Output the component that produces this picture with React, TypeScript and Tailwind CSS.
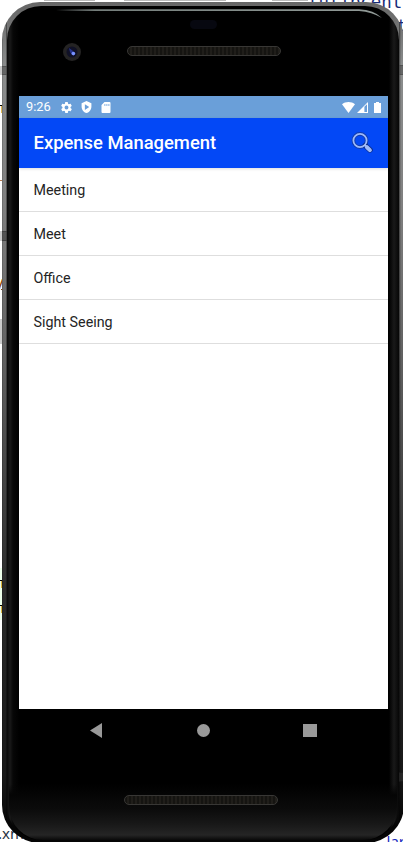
import React from "react";

const entries = ["Meeting", "Meet", "Office", "Sight Seeing"];

function Speaker() {
  return (
    <div className="h-[10px] w-[154px] shrink-0 rounded-full border border-[#383735] bg-[#151412] bg-[repeating-linear-gradient(90deg,#151411_0_2px,#201e1a_2px_4px)]" />
  );
}

function Backdrop() {
  return (
    <div className="absolute inset-0 flex flex-col justify-between overflow-hidden bg-white font-['DejaVu_Sans_Mono',monospace] text-[15px] text-[#172b78]">
      <div className="flex items-start justify-between">
        <div className="flex w-[6px] flex-col">
          <div className="mt-[66px] h-[9px] bg-[#ccc]" />
          <div className="mt-[30px] h-px bg-black" />
          <div className="ml-px h-[7px] w-px bg-[#e3b94f]" />
          <div className="mt-[67px] h-px w-[2px] bg-[#b77b51]" />
          <div className="mt-[50px] h-[10px] bg-[#ccc]" />
          <div className="mt-[34px] flex h-[16px] justify-end leading-4 text-[#8b4300] underline"><span className="mr-[2px]">y</span></div>
          <div className="mt-[28px] h-[25px] bg-[#ccc]" />
          <div className="mt-[224px] h-[52px] w-[2px] bg-[#edffea] pt-[12px]">
            <div className="h-px bg-black" />
            <div className="ml-px h-[7px] w-px bg-[#dfb53c]" />
            <div className="mt-[17px] h-px bg-black" />
            <div className="ml-px h-[7px] w-px bg-[#dfb53c]" />
          </div>
        </div>
        <div className="ml-[38px] h-px w-[51px] bg-[#bbb]" />
        <div className="ml-[29px] h-px w-[102px] bg-[#bbb]" />
        <div className="ml-[46px] h-px w-[36px] bg-[#bbb]" />
        <div className="-mt-[7px] w-[95px] shrink-0 whitespace-nowrap leading-[18px]">
          <div className="text-[17.4px]">tulipcent</div>
          <div className="mt-[6px] pl-[89px]">t</div>
        </div>
      </div>
      <div className="-mb-[9px] flex justify-between font-['Noto_Sans',sans-serif] leading-5">
        <span className="-ml-[2px] -mt-[8px] text-[#26343f]">.xm</span>
        <span className="-mr-[2px] text-[#172bbd]">lar</span>
      </div>
    </div>
  );
}

function StatusBar() {
  return (
    <div className="flex h-[22px] shrink-0 items-center bg-[#6a9fd9] text-white">
      <span className="ml-[7px] w-[26px] text-[12.8px] leading-[22px]">9:26</span>
      <svg className="ml-[8px] size-[13px]" viewBox="0 0 24 24" fill="currentColor">
        <path d="M19.4 13a8 8 0 0 0 0-2l2.1-1.6a.5.5 0 0 0 .1-.7l-2-3.4a.5.5 0 0 0-.6-.2l-2.5 1a7 7 0 0 0-1.7-1l-.4-2.7a.5.5 0 0 0-.5-.4h-4a.5.5 0 0 0-.4.4l-.4 2.7a7 7 0 0 0-1.7 1l-2.5-1a.5.5 0 0 0-.6.2l-2 3.4a.5.5 0 0 0 .1.7L4.6 11a8 8 0 0 0 0 2l-2.1 1.6a.5.5 0 0 0-.1.7l2 3.4a.5.5 0 0 0 .6.2l2.5-1a7 7 0 0 0 1.7 1l.4 2.7c0 .2.2.4.4.4h4c.3 0 .5-.2.5-.4l.4-2.7a7 7 0 0 0 1.7-1l2.5 1a.5.5 0 0 0 .6-.2l2-3.4a.5.5 0 0 0-.1-.7zM12 15.6a3.6 3.6 0 1 1 0-7.2 3.6 3.6 0 0 1 0 7.2z" />
      </svg>
      <svg className="ml-[8px] h-[12px] w-[11px]" viewBox="0 0 18 22" fill="currentColor" fillRule="evenodd">
        <path d="M9 0 0 4v6c0 5.6 3.8 10.7 9 12 5.2-1.3 9-6.4 9-12V4zM6 6l8 5-8 5.5z" />
      </svg>
      <svg className="ml-[9px] h-[11px] w-[10px]" viewBox="0 0 9 11" fill="currentColor" fillRule="evenodd">
        <path d="M3 0h5q1 0 1 1v9q0 1-1 1H1q-1 0-1-1V3zm0 2v2h.8V2zm2 0v2h.8V2zm2 0v2h.8V2z" />
      </svg>
      <svg className="ml-auto h-[11px] w-[13px]" viewBox="0 0 13 11" fill="currentColor">
        <path d="M0 2.3C3.5-.7 9.5-.7 13 2.3L6.5 11z" />
      </svg>
      <svg className="ml-[2px] h-[11px] w-[11px]" viewBox="0 0 11 11">
        <path d="M0 11 11 0v11z" fill="white" />
        <path d="M7.4 4.8 10 2.2V10H7.4z" fill="#6a9fd9" />
      </svg>
      <svg className="ml-[6px] mr-[7px] h-[11px] w-[7px]" viewBox="0 0 7 11" fill="currentColor">
        <path d="M2 0h3v1h2v10H0V1h2z" />
      </svg>
    </div>
  );
}

function AppBar() {
  return (
    <header className="flex h-[50px] shrink-0 items-center bg-[#0348f6] pl-[14.5px] pr-[15px] text-white shadow-[0_1px_3px_#0002]">
      <h1 className="text-[18.4px] font-medium leading-[50px]">Expense Management</h1>
      <svg className="ml-auto size-[22px]" viewBox="0 0 22 22" fill="none">
        <circle cx="9" cy="8.5" r="6.6" stroke="#123aa8" strokeWidth="3.6" />
        <path d="m14.2 13.5 4.8 4.5" stroke="#092a88" strokeWidth="5.4" strokeLinecap="round" />
        <circle cx="9" cy="8.5" r="6.6" stroke="#9db9fa" strokeWidth="1.8" />
        <path d="m13.5 13 1.5 1.4" stroke="#a9c1fb" strokeWidth="1.8" />
        <path d="m15.9 15.2 3 2.9" stroke="#9db9fa" strokeWidth="4" strokeLinecap="round" />
      </svg>
    </header>
  );
}

function SideKeys({ side }: { side: "left" | "right" }) {
  return side === "left" ? (
    <div className="flex w-[5px] shrink-0 flex-col bg-[linear-gradient(90deg,#0003,transparent_30%_70%,#0008)]">
      <div className="mt-[60px] h-[9px] border-y border-[#4448] bg-[#4448]" />
      <div className="mt-[156px] h-[10px] border-y border-[#3338] bg-[#3338]" />
    </div>
  ) : (
    <div className="flex w-[5px] shrink-0 flex-col bg-[linear-gradient(90deg,#0008,transparent_40%)]">
      <div className="mt-[59px] h-[10px] border-y border-[#4448] bg-[#4448]" />
      <div className="mt-[697px] h-[10px] border-y border-[#1118] bg-[#3338]" />
    </div>
  );
}

export default function App() {
  return (
    <div className="relative h-[842px] w-[403px] overflow-hidden font-[Roboto,sans-serif]">
      <Backdrop />
      <div className="relative h-[842px] pl-[2px] pt-[2px]">
        <div className="flex h-[841px] w-[402px] overflow-hidden rounded-[38px] bg-[linear-gradient(180deg,#666_0,#8b8d8d_8%,#808080_24%,#606060_43%,#2b2b2b_70%,#181818_92%,#050505_98%)] pt-[4px] pb-[3px]">
          <SideKeys side="left" />
          <div className="min-w-0 flex-1 rounded-[34px] bg-[linear-gradient(90deg,#090909_0,#191919_3px,#070707_6px,#000_12px,#000_calc(100%-10px),#191919_calc(100%-5px),#060606_100%)] px-[2px] pt-[3px]">
            <div className="flex h-full flex-col overflow-hidden rounded-[34px] bg-[linear-gradient(180deg,transparent_775px,#050505_786px,#0b0b0b_800px,#181818_815px,#252525_826px,#090909_831px)] pl-[10px] pr-[11px]">
              <div className="flex h-[87px] shrink-0 flex-col">
                <svg className="ml-[37px] h-[11px] w-[330px] shrink-0" viewBox="0 0 330 11">
                  <defs>
                    <linearGradient id="rim"><stop stopColor="#8a9292" stopOpacity="0" /><stop offset=".12" stopColor="#747d7a" /><stop offset=".9" stopColor="#8f9895" /></linearGradient>
                  </defs>
                  <path d="M0 .3H303Q318 1 326 9Q316 3 303 2H0z" fill="url(#rim)" />
                </svg>
                <div className="ml-[171px] h-[9px] w-[27px] shrink-0 rounded-full bg-[#070810]" />
                <div className="mt-[14px] flex items-center gap-[46px] pl-[44px]">
                  <div className="flex size-[18px] items-center justify-center rounded-full bg-[#242323]">
                    <svg className="size-[12px]" viewBox="0 0 12 12">
                      <circle cx="6" cy="6" r="5.5" fill="#101126" />
                      <path d="m3 2 4 3 2 3-3 1-2-3z" fill="#26338c" />
                      <circle cx="7.4" cy="7.6" r="1.8" fill="#7892ff" />
                    </svg>
                  </div>
                  <div className="-mt-[3px]"><Speaker /></div>
                </div>
              </div>
              <main className="flex h-[613px] w-[369px] shrink-0 flex-col bg-white">
                <StatusBar />
                <AppBar />
                <ul>
                  {entries.map((entry) => (
                    <li key={entry} className="h-[44px] border-b border-[#dedede] px-[14.5px] text-[14.3px] leading-[44px] text-[#242424]">
                      {entry}
                    </li>
                  ))}
                </ul>
              </main>
              <nav className="flex h-[43px] shrink-0 items-center pl-[71px]">
                <svg className="h-[15px] w-[12px]" viewBox="0 0 12 15" fill="#999"><path d="M12 0v15L0 7.5z" /></svg>
                <div className="ml-[95px] size-[13px] rounded-full bg-[#999]" />
                <div className="ml-[93px] h-[13px] w-[14px] bg-[#999]" />
              </nav>
              <div className="flex pl-[105px] pt-[43px]"><Speaker /></div>
            </div>
          </div>
          <SideKeys side="right" />
        </div>
      </div>
    </div>
  );
}
